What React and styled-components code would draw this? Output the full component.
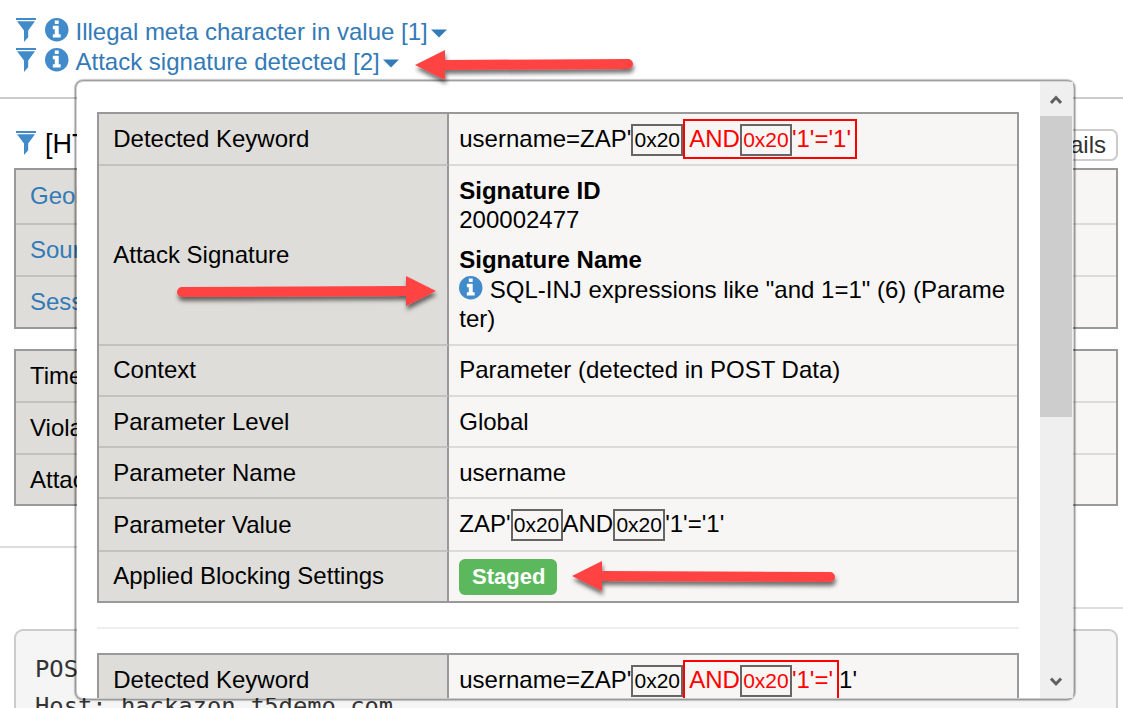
import React from "react";
import styled, { createGlobalStyle, css } from "styled-components";

const GlobalStyle = createGlobalStyle`
  * { box-sizing: border-box; }
  body { margin: 0; background: #fff; overflow: hidden; }
`;

const Page = styled.div`
  position: relative;
  width: 1123px;
  height: 708px;
  overflow: hidden;
  background: #fff;
  color: #000;
  font: 24px/29px "Liberation Sans", Arial, sans-serif;
  white-space: nowrap;
`;

const Violations = styled.div`
  display: flex;
  flex-direction: column;
  height: 99px;
  padding: 17px 0 0 16px;
  border-bottom: 2px solid #ccc;
`;

const Violation = styled.div`
  display: flex;
  align-items: flex-start;
  height: 30px;
  color: #337ab7;
`;

const FilterSvg = styled.svg`
  flex: none;
  width: 20px;
  height: 24px;
  margin: 1px 9px 0 0;
`;

const InfoSvg = styled.svg`
  flex: none;
  width: 23.5px;
  height: 23.5px;
  margin: 1.2px 7px 0 0;
`;

const ViolationName = styled.span`
  line-height: 30px;
`;

const CaretSvg = styled.svg`
  flex: none;
  width: 16px;
  height: 9px;
  margin: 12px 0 0 3px;
`;

const RequestHeader = styled.div`
  display: flex;
  justify-content: space-between;
  height: 69px;
  padding: 30px 5px 0 16px;
`;

const RequestTitle = styled.div`
  display: flex;
  font-size: 27px;
  line-height: 31px;

  ${FilterSvg} {
    margin-top: 2px;
  }
`;

const DetailsButton = styled.button`
  height: 32px;
  padding: 0 10px;
  border: 2px solid #ccc;
  border-radius: 7px;
  background: #fff;
  color: #333;
  font: inherit;
  line-height: 28px;
`;

const Table = styled.div`
  border: 2px solid #999;
  ${(p) => p.$outer && css`
    margin: 0 5px ${p.$gap}px 14px;
  `}
`;

const Row = styled.div`
  display: grid;
  grid-template-columns: ${(p) => p.$labelWidth || 350}px 1fr;
  height: ${(p) => p.$h}px;
`;

const LabelCell = styled.div`
  display: flex;
  align-items: center;
  padding: 0 0 ${(p) => p.$lift || 0}px ${(p) => p.$indent || 14}px;
  overflow: hidden;
  background: #deddd9;
  border-right: 2px solid #999;
  border-bottom: ${(p) => (p.$last ? 0 : 2)}px solid #c3c2be;
  color: ${(p) => (p.$link ? "#337ab7" : "#000")};
`;

const ValueCell = styled.div`
  display: flex;
  flex-direction: ${(p) => (p.$stack ? "column" : "row")};
  align-items: ${(p) => (p.$stack ? "stretch" : "center")};
  padding: ${(p) => (p.$stack ? 10 : 0)}px 10px ${(p) => p.$lift || 0}px 10.25px;
  background: #f7f6f4;
  border-bottom: ${(p) => (p.$last ? 0 : 2)}px solid #dcdbda;
`;

const TabRules = styled.div`
  display: flex;
  height: 83px;
`;

const TabRule = styled.div`
  width: ${(p) => p.$w}px;
  height: ${(p) => p.$h}px;
  border-bottom: 2px solid #ddd;
`;

const RequestBody = styled.pre`
  height: 110px;
  margin: 0 5px 0 14px;
  padding: 20px 19px 0;
  border: 2px solid #ccc;
  border-radius: 9px;
  background: #f5f5f5;
  color: #333;
  font: 23.8px/37px "DejaVu Sans Mono", monospace;
`;

const Popup = styled.div`
  position: absolute;
  left: 75px;
  top: 80px;
  width: 1000px;
  height: 620px;
  display: flex;
  border: 2px solid rgba(0, 0, 0, 0.16);
  border-radius: 8px;
  background: #fff;
  background-clip: padding-box;
  box-shadow: 0 0 0 1px rgba(0, 0, 0, 0.14), 0 0 3px rgba(0, 0, 0, 0.2);
`;

const PopupContent = styled.div`
  flex: 1;
  height: 616px;
  padding: 30px 21px 0 20px;
  overflow: hidden;
`;

const Separator = styled.div`
  height: 2px;
  margin: 24px 0;
  background: #eee;
`;

const ScrollTrack = styled.div`
  display: flex;
  flex-direction: column;
  width: 33px;
  height: 616px;
  background: #efefef;
`;

const ScrollButton = styled.div`
  display: flex;
  justify-content: center;
  align-items: center;
  height: 34px;
  padding: 2px 1px 0 0;
`;

const ScrollThumb = styled.div`
  width: 32px;
  height: 301px;
  margin-bottom: auto;
  background: #cdcdcd;
`;

const Hex = styled.span`
  flex: none;
  width: 52px;
  height: 32px;
  margin-top: 2px;
  border: 2px solid #666;
  font-size: 21px;
  line-height: 28px;
  text-align: center;
`;

const Highlight = styled.span`
  flex: none;
  display: flex;
  align-items: center;
  height: 40px;
  padding: 0 4px;
  border: 2px solid #f00;
  color: #f00;
`;

const SignatureTitle = styled.div`
  font-weight: bold;
`;

const SignatureId = styled.div`
  margin-bottom: 11px;
`;

const SignatureName = styled.div`
  white-space: normal;
  word-break: break-all;
  padding-top: 1px;

  ${InfoSvg} {
    vertical-align: -1.5px;
    margin: -3px 7px 0 0;
  }
`;

const Badge = styled.span`
  width: 98px;
  height: 36px;
  padding-left: 1px;
  border-radius: 6px;
  background: #5cb85c;
  color: #fff;
  font-size: 22px;
  font-weight: bold;
  line-height: 35px;
  text-align: center;
`;

const Annotations = styled.svg`
  position: absolute;
  left: 0;
  top: 0;
  width: 1123px;
  height: 708px;
  pointer-events: none;
`;

const FilterIcon = () => (
  <FilterSvg viewBox="0 0 20 24" fill="#428bca">
    <path d="M0 0H20V2H0ZM1 3.3H19L12.2 12.6V19.2L8 24V12.6Z" />
  </FilterSvg>
);

const InfoIcon = () => (
  <InfoSvg viewBox="0 128 1536 1536">
    <circle cx="768" cy="896" r="768" fill="#428bca" />
    <path
      fill="#fff"
      d="M1024 1376v-160q0-14-9-23t-23-9h-96v-512q0-14-9-23t-23-9h-320q-14 0-23 9t-9 23v160q0 14 9 23t23 9h96v320h-96q-14 0-23 9t-9 23v160q0 14 9 23t23 9h448q14 0 23-9t9-23zM896 480v-160q0-14-9-23t-23-9h-192q-14 0-23 9t-9 23v160q0 14 9 23t23 9h192q14 0 23-9t9-23z"
    />
  </InfoSvg>
);

const Caret = () => (
  <CaretSvg viewBox="0 0 16 9" fill="#337ab7">
    <path d="M0 0.5H16L8 8.5Z" />
  </CaretSvg>
);

const Chevron = ({ down }) => (
  <svg width="12" height="10" viewBox="0 0 12 10" fill="none" stroke="#606060" strokeWidth="3">
    <path d={down ? "M1 1.5L6 6.9L11 1.5" : "M1 8L6 2.6L11 8"} />
  </svg>
);

const violations = ["Illegal meta character in value [1]", "Attack signature detected [2]"];

const sourceRows = [
  { label: "Geolocation", h: 55, lift: 2 },
  { label: "Source IP Address", h: 52, lift: 1 },
  { label: "Session ID", h: 50, lift: 1 },
];

const detailRows = [
  { label: "Time", h: 52, lift: 1 },
  { label: "Violation Rating", h: 52, lift: 1 },
  { label: "Attack Types", h: 49, lift: 0 },
];

const OuterTable = ({ rows, gap, link }) => (
  <Table $outer $gap={gap}>
    {rows.map((r, i) => (
      <Row key={r.label} $h={r.h} $labelWidth={400}>
        <LabelCell $link={link} $lift={r.lift} $last={i === rows.length - 1}>{r.label}</LabelCell>
        <ValueCell $last={i === rows.length - 1} />
      </Row>
    ))}
  </Table>
);

const Field = ({ label, h, last, stack, lift, valueLift = lift, children }) => (
  <Row $h={h} $labelWidth={350}>
    <LabelCell $last={last} $lift={lift} $indent={14.25}>{label}</LabelCell>
    <ValueCell $last={last} $lift={valueLift} $stack={stack}>{children}</ValueCell>
  </Row>
);

export default function App() {
  return (
    <>
      <GlobalStyle />
      <Page>
        <Violations>
          {violations.map((v) => (
            <Violation key={v}>
              <FilterIcon />
              <InfoIcon />
              <ViolationName>{v}</ViolationName>
              <Caret />
            </Violation>
          ))}
        </Violations>
        <RequestHeader>
          <RequestTitle>
            <FilterIcon />
            <span>[HTTP]</span>
          </RequestTitle>
          <DetailsButton>Details</DetailsButton>
        </RequestHeader>
        <OuterTable rows={sourceRows} gap={20} link />
        <OuterTable rows={detailRows} gap={40} />
        <TabRules>
          <TabRule $w={500} $h={2} />
          <TabRule $w={623} $h={63} />
        </TabRules>
        <RequestBody>{"POST /\nHost: hackazon.f5demo.com"}</RequestBody>

        <Popup>
          <PopupContent>
            <Table>
              <Field label="Detected Keyword" h={52} lift={1}>
                username=ZAP'<Hex>0x20</Hex>
                <Highlight>AND<Hex>0x20</Hex>'1'='1'</Highlight>
              </Field>
              <Field label="Attack Signature" h={180} lift={1} stack>
                <SignatureTitle>Signature ID</SignatureTitle>
                <SignatureId>200002477</SignatureId>
                <SignatureTitle>Signature Name</SignatureTitle>
                <SignatureName>
                  <InfoIcon />SQL-INJ expressions like "and 1=1" (6) (Parameter)
                </SignatureName>
              </Field>
              <Field label="Context" h={51} lift={2}>Parameter (detected in POST Data)</Field>
              <Field label="Parameter Level" h={51}>Global</Field>
              <Field label="Parameter Name" h={51}>username</Field>
              <Field label="Parameter Value" h={53} valueLift={2}>
                ZAP'<Hex>0x20</Hex>AND<Hex>0x20</Hex>'1'='1'
              </Field>
              <Field label="Applied Blocking Settings" h={49} lift={2} valueLift={0} last>
                <Badge>Staged</Badge>
              </Field>
            </Table>
            <Separator />
            <Table>
              <Field label="Detected Keyword" h={52} lift={1}>
                username=ZAP'<Hex>0x20</Hex>
                <Highlight>AND<Hex>0x20</Hex>'1'='</Highlight>1'
              </Field>
            </Table>
          </PopupContent>
          <ScrollTrack>
            <ScrollButton><Chevron /></ScrollButton>
            <ScrollThumb />
            <ScrollButton><Chevron down /></ScrollButton>
          </ScrollTrack>
        </Popup>

        <Annotations viewBox="0 0 1123 708">
          <defs>
            <filter id="arrowShadow" x="-10%" y="-50%" width="120%" height="220%">
              <feDropShadow dx="1" dy="4" stdDeviation="2" floodColor="#000" floodOpacity="0.55" />
            </filter>
          </defs>
          <g fill="#ff4343">
            <path filter="url(#arrowShadow)" d="M415 65L445 50V60L628 59A5 5 0 0 1 628 69L445 70V80Z" />
            <path filter="url(#arrowShadow)" d="M436 291L406 276V286L182 287A5 5 0 0 0 182 297L406 296V306Z" />
            <path filter="url(#arrowShadow)" d="M572 576L602 561V571L830 572A5 5 0 0 1 830 582L602 581V591Z" />
          </g>
        </Annotations>
      </Page>
    </>
  );
}
